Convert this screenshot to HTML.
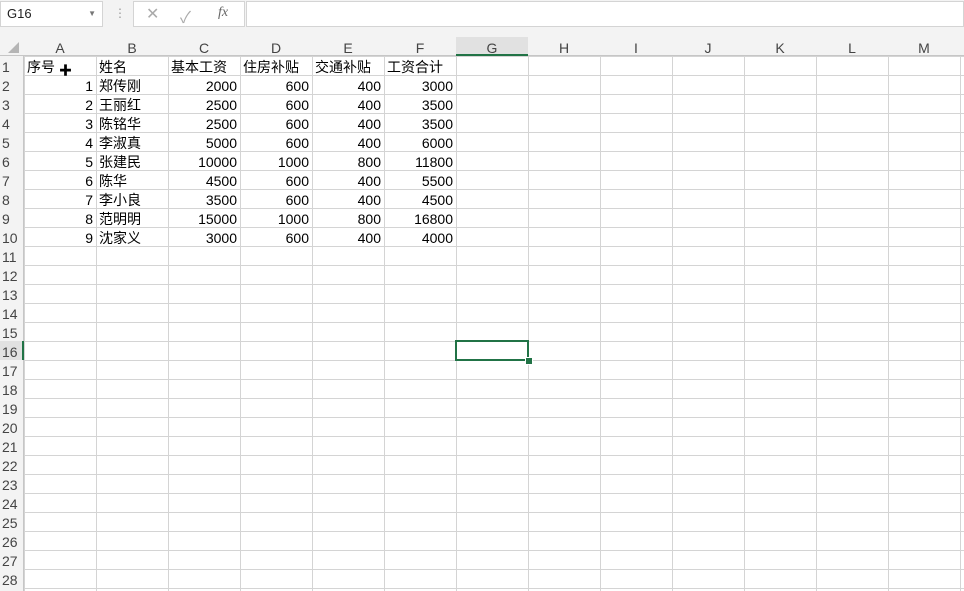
<!DOCTYPE html>
<html><head><meta charset="utf-8"><style>
body{margin:0;width:964px;height:591px;overflow:hidden;background:#fff;font-family:"Liberation Sans","Noto Sans CJK SC",sans-serif;font-size:14px;color:#000;position:relative}
.top{position:absolute;left:0;top:0;width:964px;height:37px;background:#f3f3f3}
.nb{position:absolute;left:0;top:1px;width:103px;height:26px;background:#fff;border:1px solid #d4d4d4;box-sizing:border-box;font-size:13px;line-height:24px;padding-left:6px;color:#222}
.fb{position:absolute;left:246px;top:1px;width:718px;height:26px;background:#fff;border:1px solid #d4d4d4;box-sizing:border-box}
.mid{position:absolute;left:133px;top:1px;width:112px;height:26px;background:#fff;border:1px solid #d4d4d4;box-sizing:border-box;color:#aaa}
.grid{position:absolute;left:0;top:37px;width:964px;height:554px;
background-image:linear-gradient(to right,#d4d4d4 1px,transparent 1px),linear-gradient(to bottom,#d4d4d4 1px,transparent 1px);
background-size:72px 19px;background-position:24px 0px}
.hdr{position:absolute;top:37px;left:0;width:964px;height:19px;background:#f3f3f3;border-bottom:1px solid #c6c6c6;box-sizing:border-box}
.rh{position:absolute;left:0;top:56px;width:24px;height:535px;background:#f3f3f3;border-right:1px solid #c6c6c6;box-sizing:border-box}
.c{position:absolute;height:19px;line-height:23px;white-space:nowrap}
.ch{position:absolute;top:37px;height:19px;line-height:22px;text-align:center;width:72px;color:#444;font-size:14px}
.rn{position:absolute;left:0;width:22px;text-align:left;padding-left:2px;height:19px;line-height:22px;color:#444;font-size:14px}
.r{text-align:right;width:69px}
</style></head><body>
<div class="top"></div>
<div class="nb">G16<span style="position:absolute;right:6px;top:0;font-size:8px;color:#777">▼</span></div>
<div style="position:absolute;left:114px;top:6px;color:#999;font-size:12px">⋮</div>
<div class="mid"><span style="position:absolute;left:12px;top:2px;font-size:16px">✕</span><span style="position:absolute;left:46px;top:2px;font-size:16px">✓</span><span style="position:absolute;left:84px;top:3px;font-family:'Liberation Serif',serif;font-style:italic;color:#666">fx</span></div>
<div class="fb"></div>
<div class="grid"></div>
<div class="hdr"></div>
<div class="rh"></div>
<div style="position:absolute;left:456px;top:37px;width:72px;height:19px;background:#e1e1e1;border-bottom:2px solid #217346;box-sizing:border-box"></div>
<div style="position:absolute;left:0;top:341px;width:24px;height:19px;background:#e1e1e1;border-right:2px solid #217346;box-sizing:border-box"></div>
<div style="position:absolute;left:8px;top:42px;width:0;height:0;border-left:11px solid transparent;border-bottom:11px solid #b5b5b5"></div>
<div id="content"></div>
<div style="position:absolute;left:455px;top:340px;width:74px;height:21px;border:2px solid #217346;box-sizing:border-box"></div>
<div style="position:absolute;left:525px;top:357px;width:6px;height:6px;background:#217346;border:1px solid #fff"></div>
<script>
var h='';var cols='ABCDEFGHIJKLM';
for(var i=0;i<13;i++)h+='<div class="ch" style="left:'+(24+72*i)+'px">'+cols[i]+'</div>';
for(var r=1;r<=28;r++)h+='<div class="rn" style="top:'+(56+19*(r-1))+'px">'+r+'</div>';
var d=[["序号","姓名","基本工资","住房补贴","交通补贴","工资合计"],
[1,"郑传刚",2000,600,400,3000],[2,"王丽红",2500,600,400,3500],[3,"陈铭华",2500,600,400,3500],
[4,"李淑真",5000,600,400,6000],[5,"张建民",10000,1000,800,11800],[6,"陈华",4500,600,400,5500],
[7,"李小良",3500,600,400,4500],[8,"范明明",15000,1000,800,16800],[9,"沈家义",3000,600,400,4000]];
for(var r=0;r<d.length;r++)for(var c=0;c<6;c++){var v=d[r][c];var x=24+72*c;var t=56+19*r;
if(typeof v=='number')h+='<div class="c r" style="left:'+x+'px;top:'+t+'px">'+v+'</div>';
else h+='<div class="c" style="left:'+(x+3)+'px;top:'+t+'px">'+v+'</div>';}
h+='<div style="position:absolute;left:59px;top:64px;font-size:13px;line-height:13px">✚</div>';
document.getElementById('content').innerHTML=h;
</script>
</body></html>
